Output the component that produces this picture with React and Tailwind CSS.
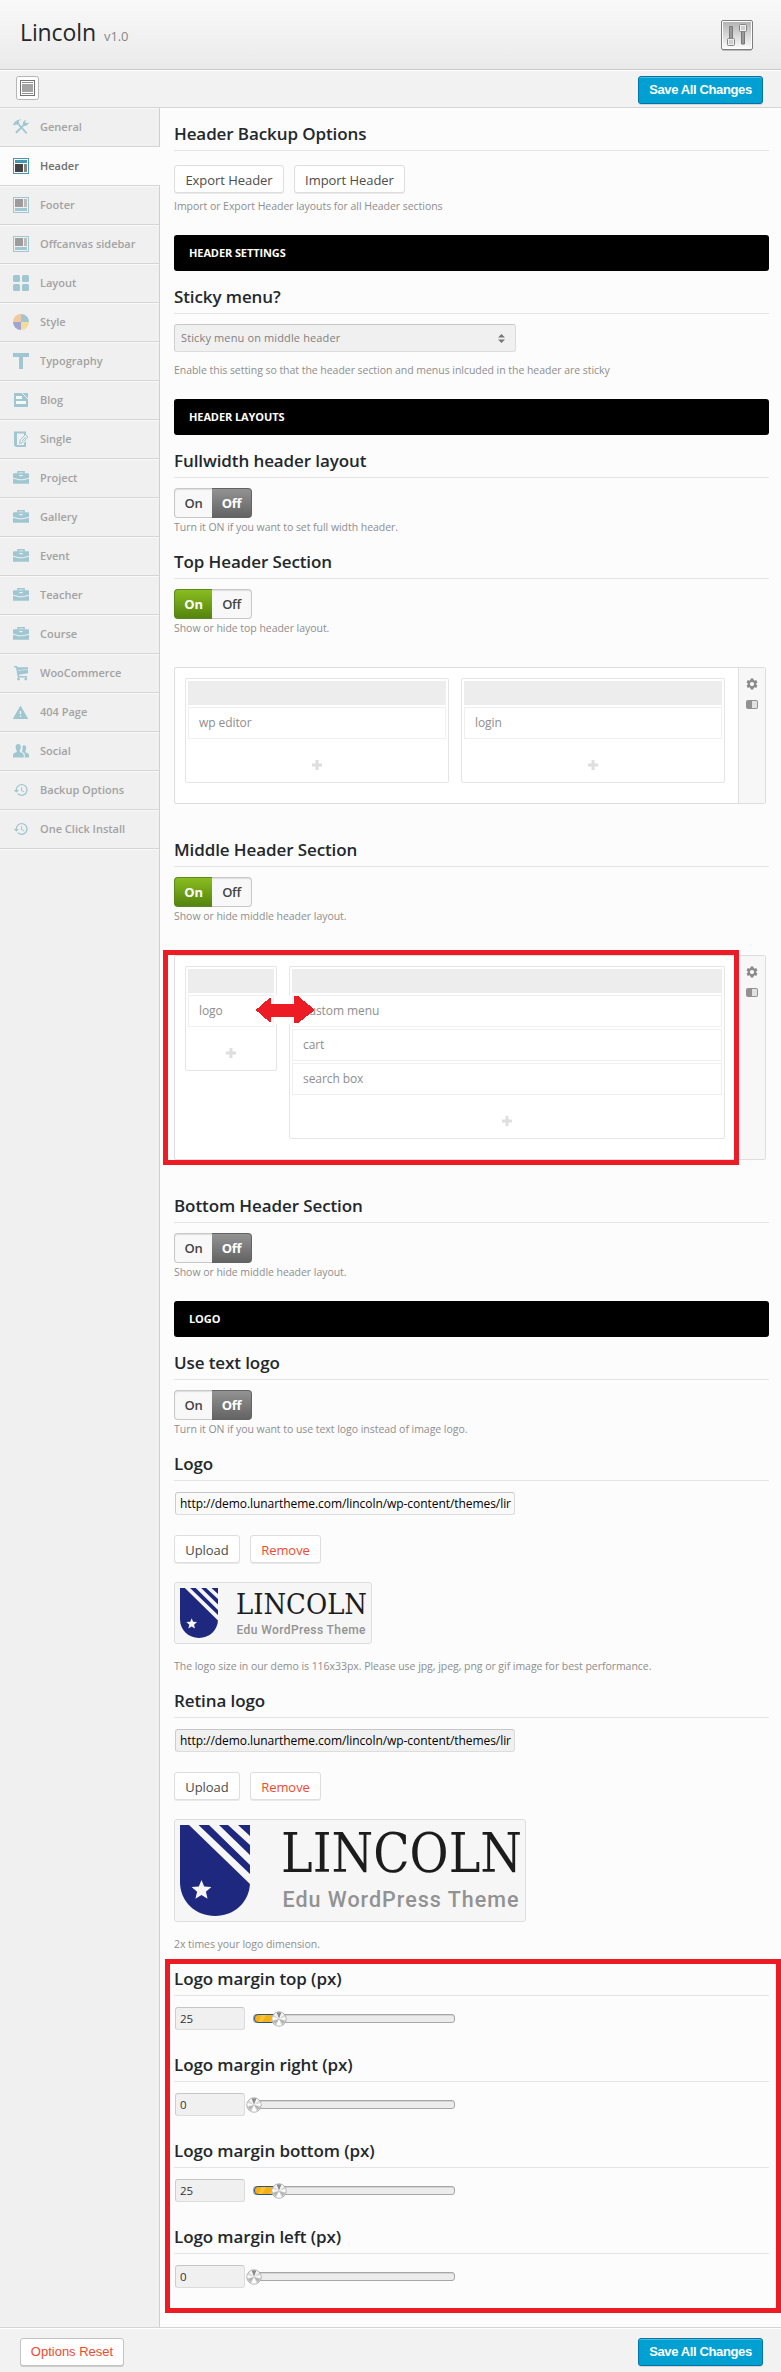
import React from "react";
import { MdHistory, MdWarning, MdSettings } from "react-icons/md";

const Svg = ({ children }) => (
  <svg width="16" height="16" viewBox="0 0 16 16" fill="currentColor">
    {children}
  </svg>
);

const ToolsIcon = () => (
  <Svg>
    <path d="M0 5.2 2.4 2.2Q5 .2 8.2.6L5.6 2.2l1 2L4.4 6.200 3.400 5.200 1.400 6.600z" />
    <path d="m5 6 1.300-1.300 8 9-1.200 1.200z" />
    <path d="M2.200 13.100 9.800 5.900Q9.200 2.600 12.700.8L12.300 3.200 13.300 4.200 15.800 3.600Q14.800 7.200 11 7L3.700 14.600z" />
  </Svg>
);

const HeaderIcon = () => (
  <Svg>
    <path d="M0 0h16v16H0zM1 1v14h14V1z" fillRule="evenodd" fill="#4596b0" />
    <path d="M2 2h12v3H2z" fill="#4596b0" />
    <path d="M2 6h8v8H2z" fill="#444" />
    <path d="M11 6h3v8h-3z" fill="#858585" />
  </Svg>
);

const FooterIcon = () => (
  <Svg>
    <path d="M0 0h16v16H0zM1 1v14h14V1z" fillRule="evenodd" />
    <path d="M2 11h12v3H2z" />
    <path d="M2 2h8v8H2z" fill="#9c9c9c" />
    <path d="M11 2h3v8h-3z" fill="#bcbcbc" />
  </Svg>
);

const LayoutIcon = () => (
  <Svg>
    <rect width="7" height="7" rx="1.500" />
    <rect x="9" width="7" height="7" rx="1.500" />
    <rect y="9" width="7" height="7" rx="1.500" />
    <rect x="9" y="9" width="7" height="7" rx="1.500" />
  </Svg>
);

const StyleIcon = () => (
  <Svg>
    <path d="M8 8V0A8 8 0 0 0 0 8z" fill="#f1c8a0" />
    <path d="M8 8h8A8 8 0 0 0 8 0z" />
    <path d="M8 8v8a8 8 0 0 0 8-8z" fill="#f3dc9c" />
    <path d="M8 8H0a8 8 0 0 0 8 8z" fill="#a0a6d0" />
  </Svg>
);

const TypeIcon = () => (
  <Svg>
    <path d="M0 0h16v4h-6v12H6V4H0z" />
  </Svg>
);

const BlogIcon = () => (
  <Svg>
    <path d="M1 1h14v14H1z" />
    <path d="M3 4h6v3H3zM3 9h10v3H3z" fill="#f7f7f7" />
    <path d="M9 1 15 7" stroke="#f0f0f0" strokeWidth="1" />
  </Svg>
);

const SingleIcon = () => (
  <Svg>
    <path d="M1 .5h12v3.500h-2v-1.500H4v11.500h7V12l2-2v6H3L1 14.500z" />
    <path d="m6.500 12.500.8-3.700L12.500 3.500l2.500 2.500-5.200 5.500z" fill="#f0f0f0" stroke="currentColor" strokeWidth="1" />
    <path d="m9 10 4-4.200" stroke="currentColor" strokeWidth="1" />
  </Svg>
);

const CaseIcon = () => (
  <Svg>
    <path d="M5 3.500V1.700h6v1.800" fill="none" stroke="currentColor" strokeWidth="1.600" />
    <path d="M1 3.200h14q1 0 1 1v3.600L10 9.300H6L0 7.800V4.200q0-1 1-1z" />
    <path d="m0 8.700 6 1.500h4l6-1.500v5.100H0z" />
    <path d="M6.300 5h3.400v1.200H6.300z" fill="#f0f0f0" />
  </Svg>
);

const CartIcon = () => (
  <Svg>
    <path d="M1 1h3l.5 1.200H15v6L6 9.800l.3 1.200H14v1.500H4.800L3 2.500H1z" />
    <circle cx="5.500" cy="14" r="1.400" />
    <circle cx="12.800" cy="14" r="1.400" />
    <path d="m5 5.500 10-1.200" stroke="#f0f0f0" strokeWidth=".6" />
  </Svg>
);

const PeopleIcon = () => (
  <Svg>
    <path d="M5.200 1c1.800 0 2.800 1.400 2.600 3.300-.1 1.600-.7 2.700-1 3.200v1.600c1.600.8 3.700 1.200 3.900 2.900v2.500H0V12c.2-1.700 2.300-2.100 3.700-2.900V7.500c-.4-.5-1-1.600-1.100-3.200C2.400 2.400 3.400 1 5.200 1z" />
    <path d="M11 2.300c1.500 0 2.400 1.200 2.200 2.800-.1 1.300-.5 2.200-.8 2.700v1.500c1.300.7 3.400 1 3.600 2.500v2.700h-4.200v-2.700c0-1.400-1.200-2.200-2.600-2.800V7.700c.4-1 .6-2.400.2-4.500.4-.6.900-.9 1.600-.9z" />
  </Svg>
);

const HistoryIcon = () => <MdHistory size={16} />;
const WarnIcon = () => <MdWarning size={17} className="-ml-px" />;

const MENU = [
  ["General", ToolsIcon],
  ["Header", HeaderIcon],
  ["Footer", FooterIcon],
  ["Offcanvas sidebar", FooterIcon],
  ["Layout", LayoutIcon],
  ["Style", StyleIcon],
  ["Typography", TypeIcon],
  ["Blog", BlogIcon],
  ["Single", SingleIcon],
  ["Project", CaseIcon],
  ["Gallery", CaseIcon],
  ["Event", CaseIcon],
  ["Teacher", CaseIcon],
  ["Course", CaseIcon],
  ["WooCommerce", CartIcon],
  ["404 Page", WarnIcon],
  ["Social", PeopleIcon],
  ["Backup Options", HistoryIcon],
  ["One Click Install", HistoryIcon],
];

function Sidebar() {
  return (
    <nav className="flex w-[160px] shrink-0 flex-col bg-[#f0f0f0]">
      {MENU.map(([label, Icon]) => {
        const active = label === "Header";
        return (
          <a
            key={label}
            className={
              "flex h-[39px] shrink-0 items-center border-b border-[#d5d5d5] pl-[13px] text-[11px] font-semibold " +
              (active
                ? "bg-[#fcfcfc] text-[#6e6e6e]"
                : "border-r border-r-[#d0d0d0] text-[#a2a2a2] shadow-[inset_0_1px_0_#f9f9f9]")
            }
          >
            <span className={"flex h-4 w-[27px] items-center " + (active ? "" : "text-[#9fc6d1]")}>
              <Icon />
            </span>
            {label}
          </a>
        );
      })}
      <div className="flex-1 border-r border-[#d0d0d0] shadow-[inset_0_1px_0_#f9f9f9]" />
    </nav>
  );
}

const Heading = ({ className, children }) => (
  <h3
    className={
      "flex h-8 items-end border-b border-[#e5e5e5] pb-[3px] text-[17px] leading-[26px] font-semibold tracking-[-0.1px] text-[#23282d] " +
      className
    }
  >
    {children}
  </h3>
);

const Desc = ({ className, children }) => (
  <p className={"h-4 text-[10.500px] leading-4 tracking-[-0.04px] whitespace-nowrap text-[#8e8e8e] " + className}>
    {children}
  </p>
);

const Bar = ({ children }) => (
  <div className="mt-[21px] flex h-9 items-center rounded-[3px] bg-black pl-[15px] text-[11px] font-bold tracking-[-0.1px] text-white">
    {children}
  </div>
);

const Button = ({ danger, className, children }) => (
  <button
    className={
      "flex h-7 items-center justify-center rounded-[3px] border border-[#dedede] bg-white pt-px text-[13px] leading-[18px] tracking-[-0.05px] shadow-[0_1px_0_#e9e9e9] " +
      (danger ? "text-[#f0492e] " : "text-[#4c4c4c] ") +
      className
    }
  >
    {children}
  </button>
);

const SaveButton = () => (
  <button className="flex h-7 w-[125px] items-center justify-center rounded-[3px] border border-[#0073aa] bg-[#00a0d2] pb-px font-['Liberation_Sans',Arial,sans-serif] text-[13px] font-bold tracking-[-0.37px] text-white shadow-[inset_0_1px_0_#4fb9dd,0_1px_0_rgba(0,0,0,0.12)]">
    Save All Changes
  </button>
);

const Toggle = ({ on }) => (
  <div className="mt-2.5 flex h-[30px] w-[78px] text-[13px] tracking-[-0.3px]">
    <span
      className={
        "flex w-[38px] items-center justify-center rounded-l-[4px] border border-r-0 pt-[2px] " +
        (on
          ? "border-[#5a8a1c] bg-linear-to-b from-[#8abd20] to-[#54840d] font-bold text-white"
          : "border-[#c8c8c8] bg-[#f8f8f8] font-semibold text-[#444] shadow-[inset_0_1px_1px_#ddd]")
      }
    >
      On
    </span>
    <span
      className={
        "flex w-10 items-center justify-center rounded-r-[4px] border border-l-0 pt-[2px] " +
        (on
          ? "border-[#c8c8c8] bg-[#f8f8f8] font-semibold text-[#444] shadow-[inset_0_1px_1px_#ddd]"
          : "border-[#636363] bg-linear-to-b from-[#939393] to-[#636363] font-bold text-white")
      }
    >
      Off
    </span>
  </div>
);

const Plus = () => (
  <svg width="10" height="10" viewBox="0 0 10 10" fill="#dedede">
    <path d="M3.500 0h3v3.500H10v3H6.500V10h-3V6.500H0v-3h3.500z" />
  </svg>
);

const Column = ({ className, items }) => (
  <div className={"flex flex-col gap-0.5 rounded-[2px] border border-[#e5e5e5] p-0.5 " + className}>
    <div className="h-6 bg-[#ededed]" />
    {items.map((t) => (
      <div
        key={t}
        className="flex h-8 items-center border border-[#f0f0f0] pl-2.5 text-[12px] tracking-[-0.08px] text-[#8e8e8e]"
      >
        {t}
      </div>
    ))}
    <div className="flex h-[39px] items-center justify-center pt-[9px]">
      <Plus />
    </div>
  </div>
);

const Builder = ({ className, children, overlay }) => (
  <div className={"relative mt-[31px] flex w-[592px] rounded-[2px] border border-[#dedede] bg-white " + className}>
    <div className="flex flex-1 items-start gap-3 p-2.5 pr-[13px]">{children}</div>
    <div className="flex w-7 flex-col items-center gap-[9px] border-l border-[#dedede] bg-[#f7f7f7] pt-[9px] text-[#8a8a8a]">
      <MdSettings size={14} />
      <svg width="12" height="9" viewBox="0 0 12 9">
        <rect width="12" height="9" rx="2" fill="#929292" />
        <path d="M6 1h4q1 0 1 1v5q0 1-1 1H6z" fill="#e2e2e2" />
      </svg>
    </div>
    {overlay}
  </div>
);

const UrlField = ({ className }) => (
  <div
    className={
      "mt-[11px] ml-px h-[23px] w-[340px] rounded-[3px] border border-[#dcdcdc] border-t-[#c6c6c6] border-l-[#cccccc] pl-1 text-[12px] leading-[21px] tracking-[-0.06px] whitespace-nowrap text-black " +
      className
    }
  >
    http://demo.lunartheme.com/lincoln/wp-content/themes/lir
  </div>
);

const UploadRow = () => (
  <div className="mt-5 flex gap-2.5">
    <Button className="w-[66px]">Upload</Button>
    <Button danger className="w-[71px]">
      Remove
    </Button>
  </div>
);

const Shield = ({ width, height }) => (
  <svg width={width} height={height} viewBox="0 0 70 91" preserveAspectRatio="none" className="shrink-0">
    <path d="M0 0H70V57C70 77 54 91 35 91S0 77 0 57z" fill="#1e287f" />
    <path d="M9 0h9.500L70 49v10zM29 0h10l31 30v10zM48 0h10l12 11v9z" fill="#f6f6f6" />
    <path d="m21.500 55 2.700 6.600 7.200.5-5.500 4.600 1.700 7-6.100-3.800-6.100 3.800 1.700-7-5.500-4.600 7.200-.5z" fill="#f6f6f6" />
  </svg>
);

const Slider = ({ value }) => (
  <div className="relative h-[9px] w-[202px] rounded-[3px] border border-[#a6a6a6] bg-[#ececec] shadow-[inset_0_1px_0_#d4d4d4]">
    {value > 0 && (
      <div className="absolute -top-px left-0 h-[9px] w-6 rounded-[4px] border border-[#2a5580] bg-[repeating-linear-gradient(115deg,#f6b016_0_6px,#fbc235_6px_10px)]" />
    )}
    <svg
      width="16"
      height="16"
      viewBox="0 0 16 16"
      className="absolute -top-[4.500px]"
      style={{ left: value > 0 ? 17 : -8 }}
    >
      <circle cx="8" cy="8" r="7.200" fill="#d9d9d9" stroke="#aaa" strokeWidth=".9" />
      <path d="M8 8 5.500 1.500h5z" fill="#8c8c8c" />
      <path d="m8 8 6.500-2v3zM8 8 1.500 6v3zM8 8l-2.500 6.500h5z" fill="#fff" />
      <path d="m8 8 6 2-2.500 3zM8 8l-6 2 2.500 3z" fill="#b4b4b4" />
      <path d="M8 8 10.500 1.500 13 3.500zM8 8 5.500 1.500 3 3.500z" fill="#f4f4f4" />
    </svg>
  </div>
);

const MarginField = ({ label, value, className }) => (
  <>
    <Heading className={className}>{label}</Heading>
    <div className="mt-[11px] ml-px flex h-[23px] items-center gap-2">
      <div className="h-full w-[70px] rounded-[3px] border border-[#dcdcdc] border-t-[#c6c6c6] border-l-[#cccccc] bg-[#f0f0f0] pl-1 text-[11.500px] leading-[22px] text-[#333]">
        {value}
      </div>
      <Slider value={value} />
    </div>
  </>
);

export default function App() {
  return (
    <div className="flex h-[2372px] w-[781px] flex-col overflow-hidden bg-[#fcfcfc] font-['Open_Sans','Noto_Sans',sans-serif]">
      <header className="flex h-[70px] shrink-0 items-start justify-between border-b border-[#c8c8c8] bg-linear-to-b from-[#f9f9f9] to-[#eaeaea] pr-7 pl-5">
        <h1 className="flex items-baseline gap-2 pt-4 text-[23px] leading-8 tracking-[-0.1px] text-[#23282d]">
          Lincoln <small className="text-[13px] text-[#888]">v1.0</small>
        </h1>
        <svg width="32" height="31" viewBox="0 0 32 31" className="mt-5">
          <defs>
            <linearGradient id="panel" x1="0" y1="0" x2="0" y2="1">
              <stop offset="0" stopColor="#b4b4b4" />
              <stop offset="1" stopColor="#fafafa" />
            </linearGradient>
          </defs>
          <rect x="1" y="2" width="30" height="29" rx="1.500" fill="#bbb" />
          <rect x=".5" y=".5" width="31" height="29" rx="1.500" fill="#fdfdfd" stroke="#7d7d7d" />
          <rect x="2" y="2" width="28" height="26" fill="url(#panel)" />
          <path d="M8.500 6.500h3V20h-3zM20.500 10h3v14h-3z" fill="#9a9a9a" stroke="#777" />
          <rect x="6.500" y="18.500" width="7" height="7" rx="1" fill="#eee" stroke="#858585" />
          <rect x="18.500" y="4.500" width="7" height="7" rx="1" fill="#eee" stroke="#858585" />
          <path d="M8 21h4M8 23h4M20 7h4M20 9h4" stroke="#b0b0b0" />
        </svg>
      </header>

      <div className="flex h-[38px] shrink-0 items-start justify-between border-b border-[#d5d5d5] bg-[#f2f2f2] pt-[6px] pr-[18px] pl-4 shadow-[inset_0_1px_0_#fff]">
        <svg width="23" height="24" viewBox="0 0 23 24">
          <rect x=".5" y=".5" width="22" height="23" rx="2" fill="#fdfdfd" stroke="#b5b5b5" />
          <rect x="4.500" y="4.500" width="14" height="15" fill="#fff" stroke="#737373" />
          <path d="M6 6.500h11M6 17.500h11" stroke="#8c8c8c" />
          <rect x="6" y="8" width="11" height="8" fill="#a3a3a3" />
        </svg>
        <SaveButton />
      </div>

      <div className="flex h-[2219px] shrink-0">
        <Sidebar />
        <main className="w-[609px] pl-3.5">
          <Heading className="mt-[11px]">Header Backup Options</Heading>
          <div className="mt-3.5 flex gap-2.5">
            <Button className="w-[110px]">Export Header</Button>
            <Button className="w-[111px]">Import Header</Button>
          </div>
          <Desc className="mt-[5px]">Import or Export Header layouts for all Header sections</Desc>

          <Bar>HEADER SETTINGS</Bar>
          <Heading className="mt-[11px]">Sticky menu?</Heading>
          <div className="mt-2.5 flex h-7 w-[342px] items-center justify-between rounded-[3px] border border-[#dcdcdc] border-t-[#c8c8c8] border-l-[#cfcfcf] bg-[#f0f0f0] pr-[10px] pl-1.5 text-[11px] font-medium tracking-[0.13px] text-[#808080]">
            Sticky menu on middle header
            <svg width="7" height="9" viewBox="0 0 7 9" fill="#777">
              <path d="M3.500 0 7 3.600H0zM3.500 9 0 5.400h7z" />
            </svg>
          </div>
          <Desc className="mt-2.5">
            Enable this setting so that the header section and menus inlcuded in the header are sticky
          </Desc>

          <Bar>HEADER LAYOUTS</Bar>
          <Heading className="mt-[11px]">Fullwidth header layout</Heading>
          <Toggle />
          <Desc className="mt-px">Turn it ON if you want to set full width header.</Desc>

          <Heading className="mt-3">Top Header Section</Heading>
          <Toggle on />
          <Desc className="mt-px">Show or hide top header layout.</Desc>
          <Builder className="h-[137px]">
            <Column className="w-[264px]" items={["wp editor"]} />
            <Column className="w-[264px]" items={["login"]} />
          </Builder>

          <Heading className="mt-[31px]">Middle Header Section</Heading>
          <Toggle on />
          <Desc className="mt-px">Show or hide middle header layout.</Desc>
          <Builder
            className="h-[205px]"
            overlay={
              <>
                <div className="absolute -top-1.5 -left-3 h-[215px] w-[576px] border-[5px] border-[#ed1c24]" />
                <svg width="60" height="30" viewBox="0 0 60 30" className="absolute top-[39px] left-[80px]">
                  <path d="M19 0h16v29H19z" fill="#fff" />
                  <path
                    d="M.7 15 14.500 3H16v6h23V1h4L60 15 43 28h-4v-6H16v5h-1.500z"
                    fill="#ed1c24"
                    shapeRendering="crispEdges"
                  />
                </svg>
              </>
            }
          >
            <Column className="w-[92px]" items={["logo"]} />
            <Column className="w-[436px]" items={["custom menu", "cart", "search box"]} />
          </Builder>

          <Heading className="mt-[31px]">Bottom Header Section</Heading>
          <Toggle />
          <Desc className="mt-px">Show or hide middle header layout.</Desc>

          <Bar>LOGO</Bar>
          <Heading className="mt-[11px]">Use text logo</Heading>
          <Toggle />
          <Desc className="mt-px">Turn it ON if you want to use text logo instead of image logo.</Desc>

          <Heading className="mt-3">Logo</Heading>
          <UrlField className="bg-[#fafafa]" />
          <UploadRow />
          <div className="mt-[19px] flex h-[62px] w-[198px] gap-[18px] rounded-[3px] border border-[#dedede] bg-[#f6f6f6] pt-[5px] pl-[5px]">
            <Shield width={38} height={50} />
            <svg width="133" height="50" viewBox="0 0 133 50">
              <text x="0" y="26" fontFamily="DejaVu Serif" fontSize="28" textLength="131" lengthAdjust="spacingAndGlyphs" fill="#1c1c1c">
                LINCOLN
              </text>
              <text x="0.500" y="45.500" fontFamily="Roboto" fontWeight="500" fontSize="12" textLength="129" fill="#929292">
                Edu WordPress Theme
              </text>
            </svg>
          </div>
          <Desc className="mt-3.5">
            The logo size in our demo is 116x33px. Please use jpg, jpeg, png or gif image for best performance.
          </Desc>

          <Heading className="mt-3">Retina logo</Heading>
          <UrlField className="bg-[#f0f0f0]" />
          <UploadRow />
          <div className="mt-[19px] flex h-[103px] w-[352px] gap-[31px] rounded-[3px] border border-[#dedede] bg-[#f6f6f6] pt-[5px] pl-[5px]">
            <Shield width={70} height={91} />
            <svg width="244" height="91" viewBox="0 0 244 91">
              <text x="0" y="47" fontFamily="DejaVu Serif" fontSize="53.500" textLength="241" lengthAdjust="spacingAndGlyphs" fill="#1c1c1c">
                LINCOLN
              </text>
              <text x="1.500" y="82" fontFamily="Roboto" fontWeight="500" fontSize="21.500" textLength="236" fill="#929292">
                Edu WordPress Theme
              </text>
            </svg>
          </div>
          <Desc className="mt-3.5">2x times your logo dimension.</Desc>

          <div className="relative">
            <MarginField className="mt-3" label="Logo margin top (px)" value={25} />
            <MarginField className="mt-5" label="Logo margin right (px)" value={0} />
            <MarginField className="mt-5" label="Logo margin bottom (px)" value={25} />
            <MarginField className="mt-5" label="Logo margin left (px)" value={0} />
            <div className="absolute -top-[5px] -left-[9px] h-[354px] w-[616px] border-[5px] border-[#ed1c24]" />
          </div>
        </main>
      </div>

      <footer className="flex flex-1 items-start justify-between border-t border-[#d5d5d5] bg-[#f2f2f2] pt-2.5 pr-[18px] pl-5 shadow-[inset_0_1px_0_#fff]">
        <button className="flex h-7 w-[104px] items-center justify-center rounded-[3px] border border-[#c4c4c4] bg-white pb-px font-['Liberation_Sans',Arial,sans-serif] text-[13px] text-[#f0492e] shadow-[0_1px_0_#cfcfcf]">
          Options Reset
        </button>
        <SaveButton />
      </footer>
    </div>
  );
}
